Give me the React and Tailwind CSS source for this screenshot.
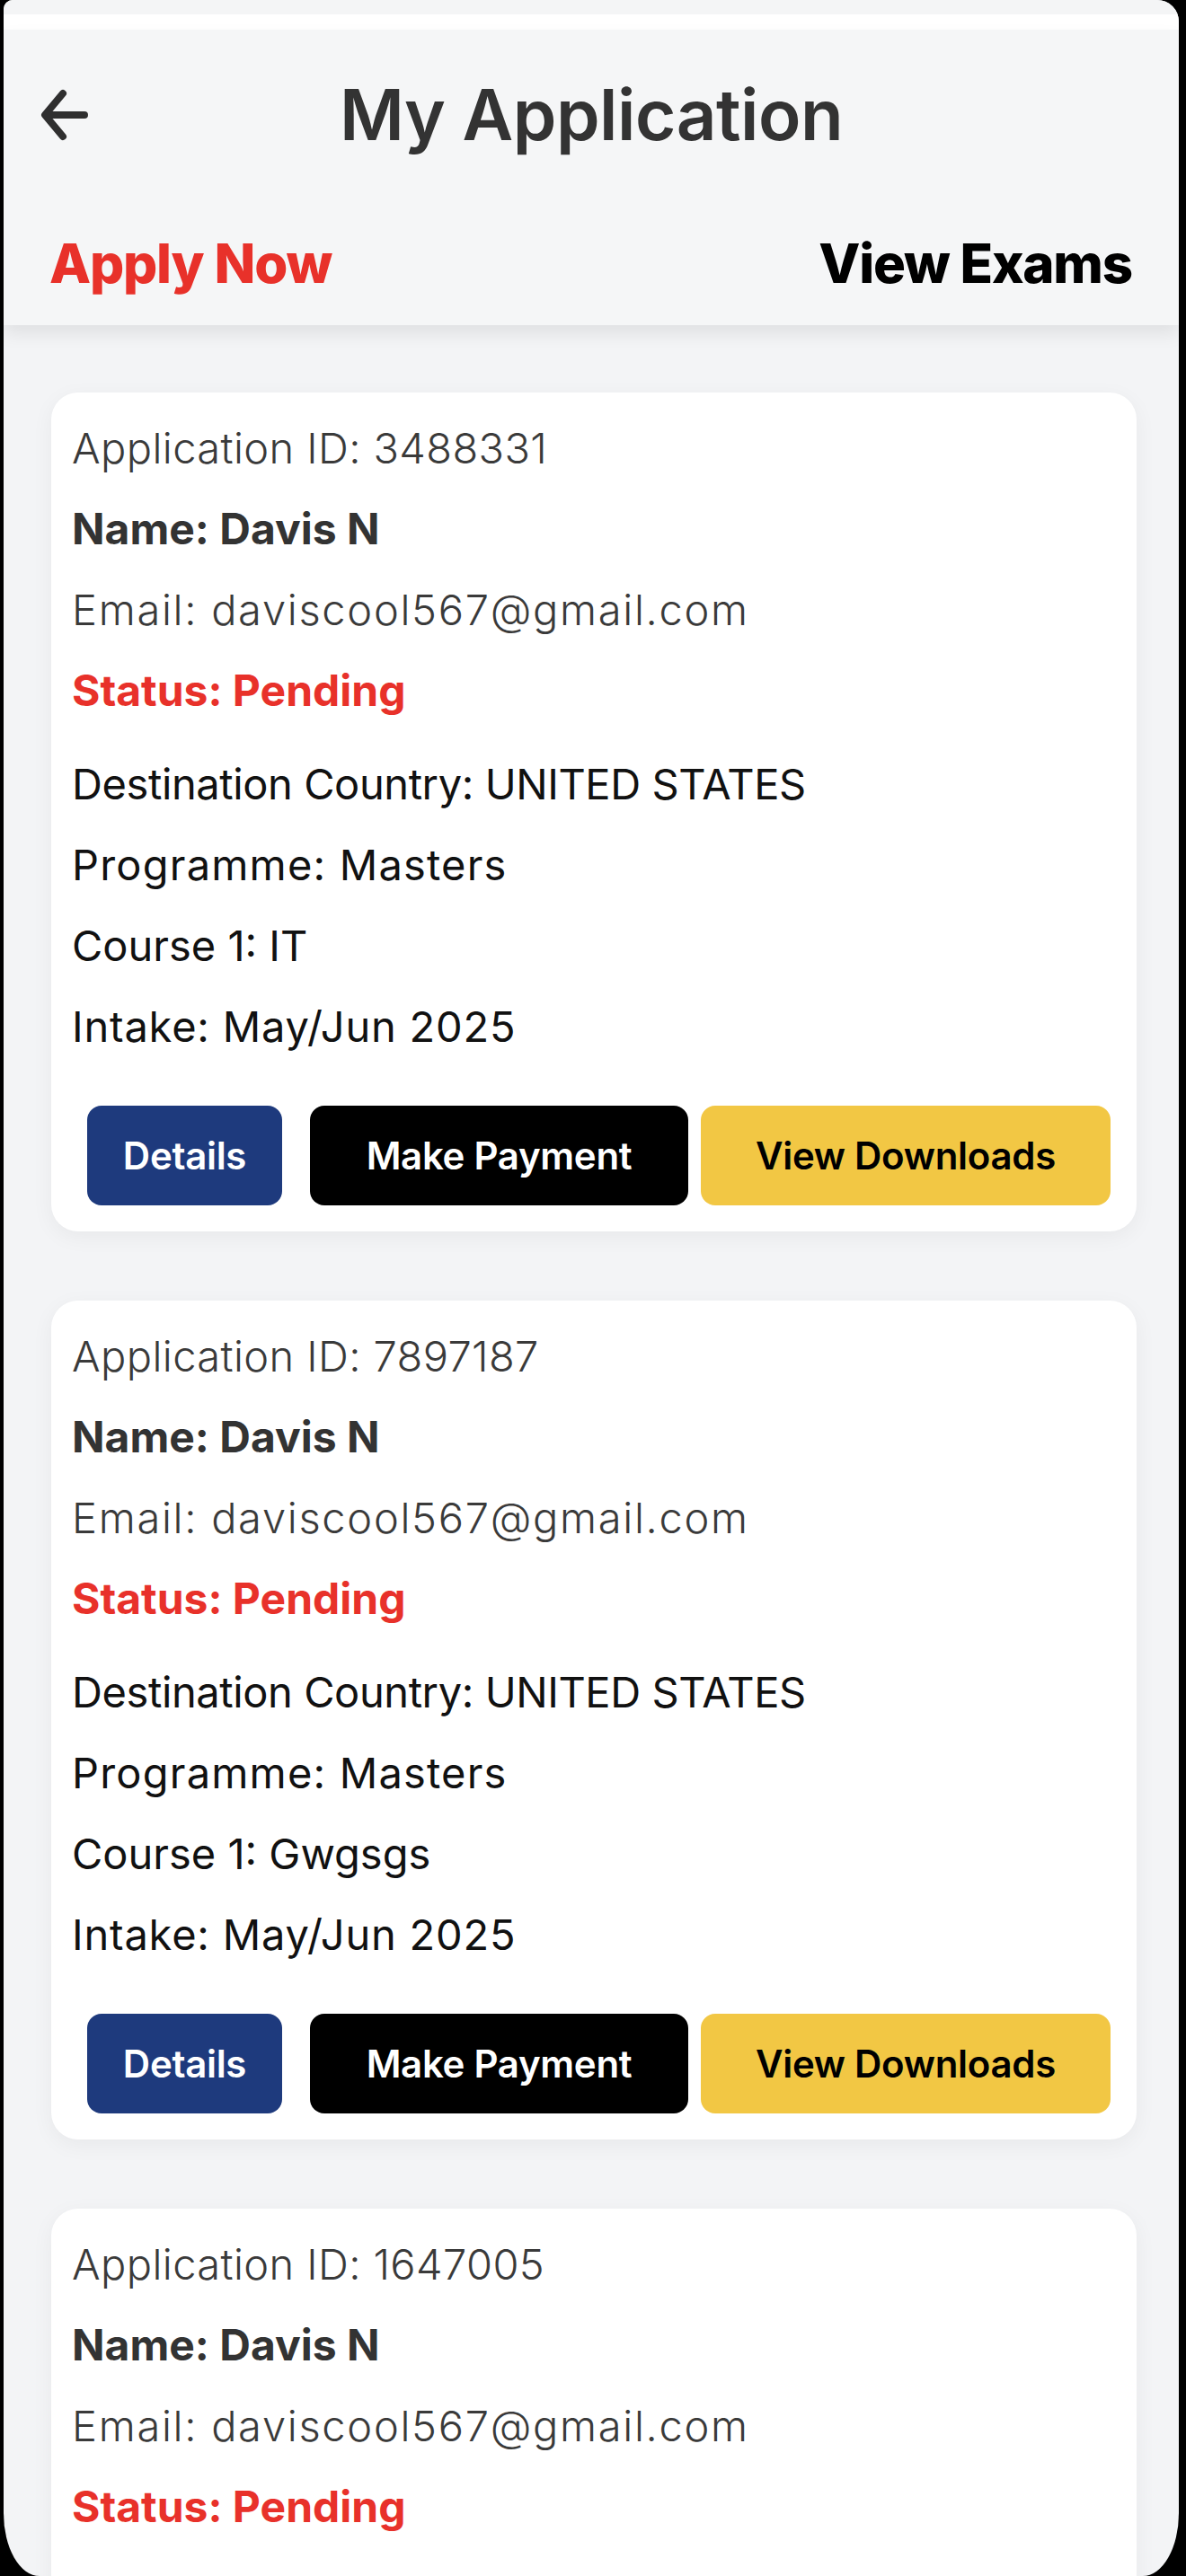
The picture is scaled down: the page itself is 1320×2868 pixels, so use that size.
import React from "react";

const apps = [
  { id: "3488331", course: "IT" },
  { id: "7897187", course: "Gwgsgs" },
  { id: "1647005", course: "IT" },
];

function BackArrow() {
  return (
    <svg width="56" height="60" viewBox="0 0 56 60" fill="none">
      <path d="M50 30 H8 M26 6 L6 30 L26 54" stroke="#2f2f2f" strokeWidth="8" strokeLinecap="round" strokeLinejoin="round" />
    </svg>
  );
}

function Card({ id, course }) {
  return (
    <div className="bg-white rounded-[30px] shadow-[0_6px_24px_rgba(0,0,0,0.05)] px-[23px] pt-[17px] pb-[29px] shrink-0">
      <div className="text-[47px] leading-[90px] text-[#3a3a3a] font-light tracking-[0.4px]">Application ID: {id}</div>
      <div className="text-[48px] leading-[90px] text-[#333333] font-bold">Name: Davis N</div>
      <div className="text-[47px] leading-[90px] text-[#3a3a3a] font-light tracking-[1.7px]">Email: daviscool567@gmail.com</div>
      <div className="text-[48px] leading-[90px] text-[#e8312a] font-bold">Status: Pending</div>
      <div className="mt-[14px] text-[47px] leading-[90px] text-[#111111] font-normal tracking-[-0.4px]">Destination Country: UNITED STATES</div>
      <div className="text-[47px] leading-[90px] text-[#111111] font-normal tracking-[1.2px]">Programme: Masters</div>
      <div className="text-[47px] leading-[90px] text-[#111111] font-normal">Course 1: {course}</div>
      <div className="text-[47px] leading-[90px] text-[#111111] font-normal tracking-[0.8px]">Intake: May/Jun 2025</div>
      <div className="flex mt-[43px] ml-[17px]">
        <button className="w-[217px] h-[111px] rounded-[16px] bg-[#1e3a7d] text-white text-[42px] font-semibold tracking-[-0.3px]">Details</button>
        <button className="ml-[31px] w-[421px] h-[111px] rounded-[16px] bg-black text-white text-[42px] font-semibold tracking-[-0.3px]">Make Payment</button>
        <button className="ml-[14px] w-[456px] h-[111px] rounded-[16px] bg-[#f2c744] text-black text-[42px] font-semibold tracking-[-0.3px]">View Downloads</button>
      </div>
    </div>
  );
}

export default function App() {
  return (
    <div className="w-[1320px] h-[2868px] bg-black overflow-hidden font-['Inter','Noto_Sans',sans-serif]">
      <div className="ml-[4px] w-[1308px] h-[2868px] bg-[#f3f4f6] overflow-hidden rounded-tl-[10px] rounded-tr-[24px] rounded-bl-[40px_70px] rounded-br-[40px_70px] flex flex-col">
        <div className="h-[16px] bg-[#f4f5f6] shrink-0" />
        <div className="h-[17px] bg-white shrink-0" />
        <div className="bg-[#f5f6f7] shadow-[0_10px_18px_rgba(0,0,0,0.08)] shrink-0 relative z-10">
          <div className="h-[190px] flex items-center relative">
            <div className="ml-[40px] flex items-center">
              <BackArrow />
            </div>
            <div className="absolute inset-0 flex items-center justify-center">
              <span className="text-[78px] font-semibold text-[#333333] tracking-[-0.5px] leading-none">My Application</span>
            </div>
          </div>
          <div className="h-[139px] flex items-center justify-between pl-[51px] pr-[52px]">
            <span className="text-[60px] font-extrabold text-[#e8312a] tracking-[-1.2px] leading-none">Apply Now</span>
            <span className="text-[60px] font-extrabold text-black tracking-[-1.2px] leading-none">View Exams</span>
          </div>
        </div>
        <div className="flex flex-col gap-[77px] pt-[75px] pl-[53px] pr-[47px]">
          {apps.map((a) => (
            <Card key={a.id} id={a.id} course={a.course} />
          ))}
        </div>
      </div>
    </div>
  );
}
